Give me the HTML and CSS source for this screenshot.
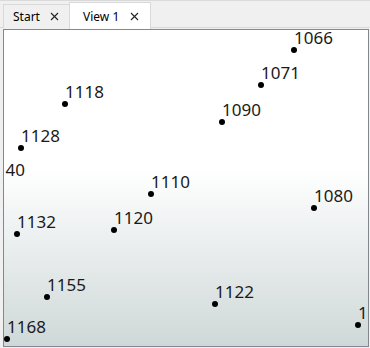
FILE: index.html
```html
<!DOCTYPE html>
<html lang="en">
  <head>
    <meta charset="UTF-8" />
    <title>View 1</title>
    <link rel="stylesheet" href="styles.css">
  </head>

  <body>
    <div class="window">
      <div class="tabs">
        <div class="tab tab-start">
          <span class="tab-title">Start</span>
          <svg class="tab-close" width="9" height="9" viewBox="0 0 9 9"><path d="M1 1 L8 8 M8 1 L1 8" stroke="#222" stroke-width="1.1" fill="none" /></svg>
        </div>
        <div class="tab tab-view active">
          <span class="tab-title">View 1</span>
          <svg class="tab-close" width="9" height="9" viewBox="0 0 9 9"><path d="M1 1 L8 8 M8 1 L1 8" stroke="#222" stroke-width="1.1" fill="none" /></svg>
        </div>
      </div>
      <div class="canvas">
        <div class="node" style="left: 290px; top: 20px"><i class="dot"></i><span class="label">1066</span></div>
        <div class="node" style="left: 257px; top: 55px"><i class="dot"></i><span class="label">1071</span></div>
        <div class="node" style="left: 218px; top: 92px"><i class="dot"></i><span class="label">1090</span></div>
        <div class="node" style="left: 61px; top: 74px"><i class="dot"></i><span class="label">1118</span></div>
        <div class="node" style="left: 17px; top: 118px"><i class="dot"></i><span class="label">1128</span></div>
        <div class="node" style="left: -18px; top: 152px"><i class="dot"></i><span class="label">1140</span></div>
        <div class="node" style="left: 147px; top: 164px"><i class="dot"></i><span class="label">1110</span></div>
        <div class="node" style="left: 310px; top: 178px"><i class="dot"></i><span class="label">1080</span></div>
        <div class="node" style="left: 13px; top: 204px"><i class="dot"></i><span class="label">1132</span></div>
        <div class="node" style="left: 110px; top: 200px"><i class="dot"></i><span class="label">1120</span></div>
        <div class="node" style="left: 43px; top: 267px"><i class="dot"></i><span class="label">1155</span></div>
        <div class="node" style="left: 211px; top: 274px"><i class="dot"></i><span class="label">1122</span></div>
        <div class="node" style="left: 3px; top: 309px"><i class="dot"></i><span class="label">1168</span></div>
        <div class="node" style="left: 354px; top: 295px"><i class="dot"></i><span class="label">1100</span></div>
      </div>
    </div>
  </body>
</html>
```

FILE: styles.css
```css
body {
  margin: 0;
  background: #f0f0f0;
  font-family: "Noto Sans", "Open Sans", sans-serif;
}

.window {
  width: 370px;
  height: 348px;
  display: flex;
  flex-direction: column;
  border-top: 1px solid #dadada;
  box-sizing: border-box;
}

.tabs {
  display: flex;
  align-items: flex-end;
  height: 27px;
  padding-left: 3px;
  border-bottom: 1px solid #d9d9d9;
  box-sizing: border-box;
}

.tab {
  display: flex;
  align-items: center;
  height: 24px;
  background: #f0f0f0;
  border: 1px solid #d9d9d9;
  border-bottom: none;
  box-sizing: border-box;
  font-size: 12px;
  color: #000;
  margin-bottom: -1px;
}

.tab-start {
  width: 67px;
  padding: 0 10px 0 9px;
}

.tab-view {
  width: 82px;
  padding: 0 11px 0 13px;
}

.tab.active {
  height: 27px;
  background: #fff;
  margin-left: -1px;
  margin-bottom: -2px;
  position: relative;
  z-index: 1;
}

.tab-close {
  margin-left: auto;
}

.canvas {
  position: relative;
  flex: 1;
  margin: 1px 1px 1px 3px;
  border: 1px solid #828790;
  overflow: hidden;
  background: linear-gradient(to bottom, #ffffff 0%, #ffffff 44%, #cfd8d8 100%);
}

.node {
  position: absolute;
  width: 0;
  height: 0;
}

.dot {
  position: absolute;
  left: -3px;
  top: -3px;
  width: 6px;
  height: 6px;
  border-radius: 50%;
  background: #000;
}

.label {
  position: absolute;
  left: 0;
  top: -21px;
  font-size: 17px;
  line-height: 17px;
  color: #1a1a1a;
  white-space: nowrap;
}
```
